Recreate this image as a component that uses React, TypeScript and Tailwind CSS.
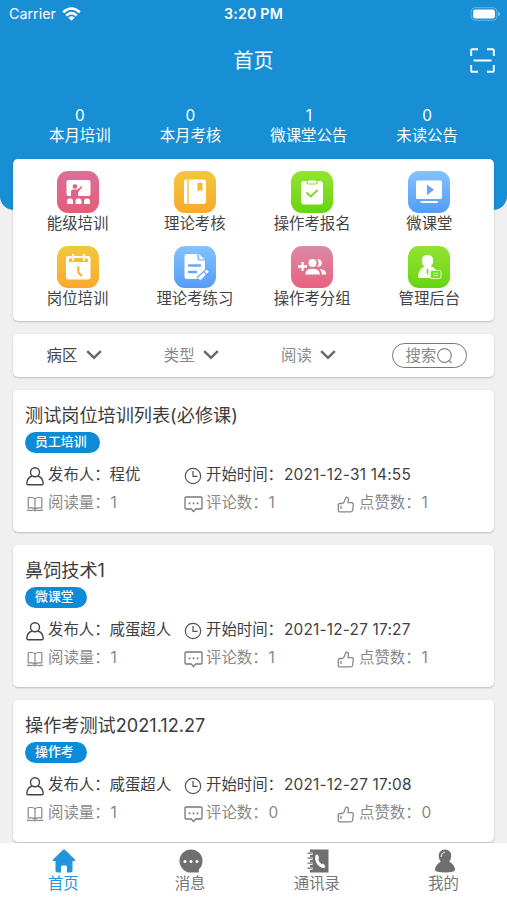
import type { ReactNode } from 'react';

const stats = [
    { label: '本月培训', value: 0 },
    { label: '本月考核', value: 0 },
    { label: '微课堂公告', value: 1 },
    { label: '未读公告', value: 0 },
];

const pink = 'bg-linear-to-b from-[#d9709a] to-[#e45c78]';
const rose = 'bg-linear-to-b from-[#db8aa6] to-[#e8607f]';
const amber = 'bg-linear-to-b from-[#f1c83c] to-[#f9a92f]';
const green = 'bg-linear-to-b from-[#93e32f] to-[#66d50f]';
const blue = 'bg-linear-to-b from-[#84c2ff] to-[#549cf6]';

const menu: { label: string; tone: string; icon: ReactNode }[] = [
    {
        label: '能级培训',
        tone: pink,
        icon: (
            <>
                <path fill="#fff" d="M11.5 9h20q2 0 2 2v12q0 2-2 2h-20q-2 0-2-2V11q0-2 2-2z" />
                <circle cx="18" cy="15.5" r="2.3" fill="#dd6488" />
                <path fill="#dd6488" d="M14 26v-5.5q0-2 2.2-2h4.3l4-3.6.9 1-4.2 5V26z" />
                <path fill="#fff" d="M10 33v-3q0-2.5 2-2.5h2q2 0 2 2.5v3zM18.5 33v-3q0-2.5 2-2.5h2q2 0 2 2.5v3zM27 33v-3q0-2.5 2-2.5h2q2 0 2 2.5v3z" />
            </>
        ),
    },
    {
        label: '理论考核',
        tone: amber,
        icon: (
            <>
                <path fill="#fff" d="M12.5 8.5H29q3 0 3 3V30q0 3-3 3H12.5q-2.5 0-2.5-2.5V11q0-2.5 2.5-2.5z" />
                <path stroke="#f5b834" strokeWidth="1.3" d="M14 8.5v24.5" />
                <path fill="#f5b834" d="M23.5 12h5v8.5L26 19l-2.5 1.5z" />
            </>
        ),
    },
    {
        label: '操作考报名',
        tone: green,
        icon: (
            <>
                <path fill="#fff" d="M13 10h16q3 0 3 3v17.5q0 3-3 3H13q-3 0-3-3V13q0-3 3-3z" />
                <rect x="16" y="9" width="10" height="4" rx="1.5" fill="#fff" stroke="#87df25" strokeWidth="1.2" />
                <path fill="none" stroke="#79da1e" strokeWidth="1.8" d="m15.5 21.5 4.2 4 7-6.5" />
            </>
        ),
    },
    {
        label: '微课堂',
        tone: blue,
        icon: (
            <>
                <rect x="8" y="9.5" width="26" height="18.5" rx="1.5" fill="#fff" />
                <path fill="#62a7f9" d="m19 13.500 7 5.300-7 5.400z" />
                <path stroke="#fff" strokeWidth="2" strokeLinecap="round" d="M13.500 31h15.500" />
            </>
        ),
    },
    {
        label: '岗位培训',
        tone: amber,
        icon: (
            <>
                <path fill="#fff" d="M11 10h20q2.500 0 2.500 2.500V31q0 2.500-2.500 2.500H11.500Q9 33.500 9 31V12q0-2 2-2z" />
                <path fill="#f4bb35" d="M12 16v-2.500l2-1.500h15l2 1.500V16z" />
                <path stroke="#fff" strokeWidth="2.200" strokeLinecap="round" d="M16 8.800v5M27 8.800v5" />
                <path fill="none" stroke="#f6b131" strokeWidth="2" strokeLinecap="round" d="M21.300 21v5.500l3 3" />
            </>
        ),
    },
    {
        label: '理论考练习',
        tone: blue,
        icon: (
            <>
                <path fill="#fff" d="M13 8h10.500v4.500q0 2 2 2h5.500v16q0 2.500-2.500 2.500H13q-2.500 0-2.500-2.500v-20Q10.500 8 13 8zM25 8l5.500 5.200h-4.300q-1.200 0-1.200-1z" />
                <path stroke="#68a8f8" strokeWidth="2.400" strokeLinecap="round" d="M15 19.500h11M15 26h7" />
                <path stroke="#61a5f7" strokeWidth="6" d="m24.500 33.500 10-9" />
                <path stroke="#fff" strokeWidth="3.200" d="m25 33 5.800-5.500M31.700 26.600l2-1.900" />
            </>
        ),
    },
    {
        label: '操作考分组',
        tone: rose,
        icon: (
            <>
                <path stroke="#fff" strokeWidth="2.300" d="M7 20.500h9M11.500 16v9" />
                <circle cx="21.500" cy="17" r="4" fill="#fff" />
                <path fill="#fff" d="M14.500 28.500v-1.500q1-4.200 7-4.200t7.200 4.200v1.500zM26 13.200q4.800-.5 4.800 3.800T26 20.800q1.700-1.600 1.700-3.800T26 13.200zM28.500 22.900q6 .4 6.500 4.100v1.500h-4q.2-3.500-2.500-5.600z" />
            </>
        ),
    },
    {
        label: '管理后台',
        tone: green,
        icon: (
            <>
                <path fill="#fff" d="M19.500 9q5.700 0 5.700 5.500 0 3.500-2.400 6 5.700 2 6.200 5.500v6H11.500Q10 32 10 30q.5-6.500 6.200-9.500-2.400-2.500-2.400-6Q13.800 9 19.500 9z" />
                <path fill="#7cdd28" d="m19.500 22 1 2-.3 4.500h-1.400l-.3-4.500z" />
                <rect x="22.500" y="24.500" width="10.500" height="8" rx="1.500" fill="#71da20" stroke="#d9f8b9" strokeWidth="1.200" />
                <path stroke="#d9f8b9" strokeWidth="1" d="M25 27.300h5.500M25 29.700h5.500" />
            </>
        ),
    },
];

const filters = [
    { label: '病区', color: 'text-[#444]' },
    { label: '类型', color: 'text-[#888]' },
    { label: '阅读', color: 'text-[#888]' },
];

const posts = [
    { title: '测试岗位培训列表(必修课)', tag: '员工培训', author: '程优', time: '2021-12-31 14:55', reads: 1, comments: 1, likes: 1 },
    { title: '鼻饲技术1', tag: '微课堂', author: '咸蛋超人', time: '2021-12-27 17:27', reads: 1, comments: 1, likes: 1 },
    { title: '操作考测试2021.12.27', tag: '操作考', author: '咸蛋超人', time: '2021-12-27 17:08', reads: 1, comments: 0, likes: 0 },
];

const tabs: { label: string; active?: boolean; icon: ReactNode }[] = [
    {
        label: '首页',
        active: true,
        icon: (
            <path d="M12 .5q.6 0 1.200.6l9.800 9.400q.8 1.500-1 1.500h-1.500v9.500q0 2-2 2H15v-5.500q0-1.500-1.300-1.500h-3.400Q9 16.500 9 18v5.500H5.500q-2 0-2-2V12H2q-1.800 0-1-1.500L10.800 1.100Q11.400.5 12 .5z" />
        ),
    },
    {
        label: '消息',
        icon: (
            <>
                <path d="M12 .5a11.500 11.500 0 0 1 11.500 11.500q0 5-3.500 8l-.3 3.500H12A11.500 11.500 0 0 1 12 .5z" />
                <g fill="#fff">
                    <circle cx="6" cy="12.500" r="1.500" />
                    <circle cx="12" cy="12.500" r="1.500" />
                    <circle cx="18" cy="12.500" r="1.500" />
                </g>
            </>
        ),
    },
    {
        label: '通讯录',
        icon: (
            <>
                <path d="M4 .5h18.500v23H4z" />
                <path fill="none" stroke="#fff" strokeWidth="3" strokeLinecap="round" d="M2.500 4.500h3M2.500 9.500h3M2.500 14.500h3M2.500 19.500h3" />
                <path fill="none" stroke="#6f6f6f" strokeWidth="1.300" strokeLinecap="round" d="M2 4.200h4M2 9.200h4M2 14.200h4M2 19.200h4" />
                <path fill="#fff" d="M9.500 6q1.800-1.300 2.700.4l.9 2.100q.3 1-.8 1.900.7 2.800 3.200 4.600 1.300-.8 2 0l1.500 1.700q.8 1.300-.7 2-3.300 1-6.500-2.700Q8 11.200 9.500 6z" />
            </>
        ),
    },
    {
        label: '我的',
        icon: (
            <>
                <path d="M12 .5q6.300.5 6.300 6.500 0 3.300-2 5.500 5.700 4 5.700 8.300 0 2.700-10 2.700T2 20.800q0-4.300 5.700-8.300-2-2.200-2-5.500 0-6 6.300-6.500z" />
                <path fill="none" stroke="#fff" strokeWidth="1" strokeLinecap="round" d="M8 7.500q0-3.500 3.500-4.500" />
            </>
        ),
    },
];

function StatusBar() {
    return (
        <div className="relative flex h-7 items-center justify-between pl-[9px] pr-[6px]">
            <div className="flex items-center gap-[6px] text-[14.300px]">
                Carrier
                <svg width="19" height="14" viewBox="0 0 19 14" fill="none" stroke="#fff" strokeWidth="2.600">
                    <path d="M1.200 5.200q8.300-7.400 16.600 0M4.200 8.500q5.300-4.700 10.600 0" />
                    <path fill="#fff" stroke="none" d="M6.300 10.500q3.200-2.600 6.400 0L9.500 13.800z" />
                </svg>
            </div>
            <span className="absolute inset-x-0 text-center text-[14.200px] font-semibold tracking-[0.2px]">3:20 PM</span>
            <svg width="31" height="14" viewBox="0 0 31 14">
                <rect x="1" y=".7" width="26" height="12.600" rx="4" fill="none" stroke="#fff" strokeOpacity=".35" />
                <rect x="3" y="2.600" width="22" height="8.800" rx="2.200" fill="#fff" />
                <path fill="#fff" fillOpacity=".5" d="M28.300 4.800q1.800.8 1.800 2.200t-1.800 2.200z" />
            </svg>
        </div>
    );
}

function PersonIcon() {
    return (
        <svg width="18" height="19" viewBox="0 0 18 19" fill="none" stroke="#444" strokeWidth="1.400">
            <circle cx="9" cy="5.300" r="4.500" />
            <path strokeLinejoin="round" d="M6 9Q1 11 .8 16.200q0 1.600 1.500 1.600h13.400q1.500 0 1.500-1.600Q17 11 12 9" />
        </svg>
    );
}

function ClockIcon() {
    return (
        <svg width="18" height="18" viewBox="0 0 18 18" fill="none" stroke="#555" strokeWidth="1.200">
            <circle cx="9" cy="9" r="7.700" />
            <path d="M9 4v5.300h4.500" />
        </svg>
    );
}

function BookIcon() {
    return (
        <svg width="18" height="16" viewBox="0 0 18 16" fill="none" stroke="#888" strokeWidth="1.200">
            <path d="M9 3Q8.300 1.500 5.500 1.500H3.200q-1 0-1 1v9.300h3.300q2.500 0 3.500 1.200 1-1.200 3.500-1.200h3.300V2.500q0-1-1-1h-2.300Q9.700 1.500 9 3zM9 3v10" />
            <path d="M1 14.800q1-.9 2.500-.5 1.500.6 2.800 0 1.500-.5 2.700.6 1.200-1.100 2.700-.6 1.300.6 2.800 0 1.500-.4 2.500.5" />
        </svg>
    );
}

function CommentIcon() {
    return (
        <svg width="19" height="17" viewBox="0 0 19 17" fill="none" stroke="#777" strokeWidth="1.300">
            <path strokeLinejoin="round" d="M2 1h15q1 0 1 1v10q0 1-1 1h-5.300l-2.200 2.600L7.300 13H2q-1 0-1-1V2q0-1 1-1z" />
            <path strokeWidth="1.700" d="M4.700 7.300h1.700M8.700 7.300h1.700M12.700 7.300h1.700" />
        </svg>
    );
}

function LikeIcon() {
    return (
        <svg width="18" height="17" viewBox="0 0 18 17" fill="none" stroke="#888" strokeWidth="1.300" strokeLinejoin="round">
            <path d="M2.800 7.500h2.500q2-.5 3-4.800Q8.600 1 9.800 1.200q2 .6 1.600 3l-.5 2.500h3.800q1.800.1 1.600 1.900l-.6 5.400q-.2 1.800-2 1.800H2.800q-1.500 0-1.500-1.500V9q0-1.500 1.500-1.500z" />
            <path d="M4 9.800v3.200" />
        </svg>
    );
}

function PostCard({ post }: { post: (typeof posts)[number] }) {
    return (
        <article className="h-[142.500px] shrink-0 rounded-[5px] bg-white px-[12px] pt-[12px] shadow-[0_1px_2px_rgba(0,0,0,0.220)]">
            <h2 className="h-[26px] text-[18.150px] leading-[26px] text-[#3c3c3c]">{post.title}</h2>
            <span className="mt-[4px] flex h-[21px] w-fit items-center rounded-full bg-[#0d8bd6] pl-[10px] pr-[13px] text-[12.900px] font-medium text-white">
                {post.tag}
            </span>
            <div className="mt-[8px] flex h-7 items-center text-[#3f3f3f]">
                <div className="flex w-[159px] items-center gap-[4px] pl-px">
                    <span className="relative top-[2px]"><PersonIcon /></span>
                    <span>发布人：{post.author}</span>
                </div>
                <div className="flex items-center gap-[4px]">
                    <span className="relative top-[2px]"><ClockIcon /></span>
                    <span>开始时间：<span className="ml-px tracking-[0.2px]">{post.time}</span></span>
                </div>
            </div>
            <div className="flex h-7 items-center text-[#888]">
                <div className="flex w-[159px] items-center gap-[4px] pl-px">
                    <span className="relative top-[2px]"><BookIcon /></span>
                    <span>阅读量：<span className="ml-px">{post.reads}</span></span>
                </div>
                <div className="flex w-[153px] items-center gap-[3px]">
                    <span className="relative top-[2px]"><CommentIcon /></span>
                    <span>评论数：<span className="ml-px">{post.comments}</span></span>
                </div>
                <div className="flex items-center gap-[4px]">
                    <span className="relative top-[2px]"><LikeIcon /></span>
                    <span>点赞数：<span className="ml-px">{post.likes}</span></span>
                </div>
            </div>
        </article>
    );
}

function App() {
    return (
        <div className="flex h-[900px] w-[507px] flex-col overflow-hidden bg-[#f0f0f0] font-['Inter','Noto_Sans_CJK_SC',sans-serif] text-[15.400px] [&_svg]:block">
            <header className="h-[210px] shrink-0 rounded-b-[14px] bg-[#188ed4] text-white">
                <StatusBar />
                <div className="flex h-[64px] items-center pr-[12px]">
                    <h1 className="flex-1 pl-[37px] pt-px text-center text-[20px]">首页</h1>
                    <svg width="25" height="25" viewBox="0 0 25 25" fill="none" stroke="#fff" strokeWidth="1.900">
                        <path d="M1.200 8V2.200q0-1 1-1H8M17 1.200h5.800q1 0 1 1V8M23.800 17v5.800q0 1-1 1H17M8 23.800H2.200q-1 0-1-1V17M3.500 12.500h18" />
                    </svg>
                </div>
                <div className="flex justify-evenly pt-[14px]">
                    {stats.map((stat) => (
                        <div key={stat.label} className="text-center leading-5">
                            <div>{stat.value}</div>
                            <div>{stat.label}</div>
                        </div>
                    ))}
                </div>
            </header>

            <main className="-mt-[51.500px] flex min-h-0 flex-1 flex-col gap-[12.500px] px-[13px]">
                {/* Shortcut menu */}
                <section className="grid h-[162.500px] shrink-0 auto-rows-[75.500px] grid-cols-4 rounded-[5px] bg-white px-[6px] pt-[12px] shadow-[0_1px_2px_rgba(0,0,0,0.220)]">
                    {menu.map((item) => (
                        <div key={item.label} className="flex flex-col items-center text-[#444]">
                            <div className={`size-[42px] rounded-[11px] ${item.tone}`}>
                                <svg width="42" height="42" viewBox="0 0 42 42" fill="none">{item.icon}</svg>
                            </div>
                            <span className="leading-[21px]">{item.label}</span>
                        </div>
                    ))}
                </section>

                {/* Filters */}
                <section className="grid h-[43.500px] shrink-0 grid-cols-4 items-center rounded-[5px] bg-white px-[6px] shadow-[0_1px_2px_rgba(0,0,0,0.220)]">
                    {filters.map((filter) => (
                        <div key={filter.label} className={`flex items-center gap-[8.500px] pl-[27.500px] ${filter.color}`}>
                            {filter.label}
                            <svg width="16" height="10" viewBox="0 0 16 10" fill="none" stroke="#666" strokeWidth="2.500">
                                <path d="m1.200 1.200 6.800 6.600 6.800-6.600" />
                            </svg>
                        </div>
                    ))}
                    <button className="flex h-[25px] w-[75px] items-center justify-center justify-self-center rounded-full border border-[#777] text-[#888]">
                        搜索
                        <svg width="17" height="17" viewBox="0 0 17 17" fill="none" stroke="#888" strokeWidth="1.200">
                            <circle cx="8.500" cy="8.500" r="6.800" />
                            <path d="m12.500 13 3 3" />
                        </svg>
                    </button>
                </section>

                {posts.map((post) => (
                    <PostCard key={post.title} post={post} />
                ))}
            </main>

            <nav className="z-10 grid h-[57px] shrink-0 grid-cols-4 bg-white pt-[6px]">
                {tabs.map((tab) => (
                    <div key={tab.label} className={`flex flex-col items-center ${tab.active ? 'text-[#2196dc]' : 'text-[#777]'}`}>
                        <svg width="24" height="24" viewBox="0 0 24 24" fill={tab.active ? '#2196dc' : '#6f6f6f'} className="relative left-px">{tab.icon}</svg>
                        <span className="leading-[21px]">{tab.label}</span>
                    </div>
                ))}
            </nav>
        </div>
    );
}

export default App;
